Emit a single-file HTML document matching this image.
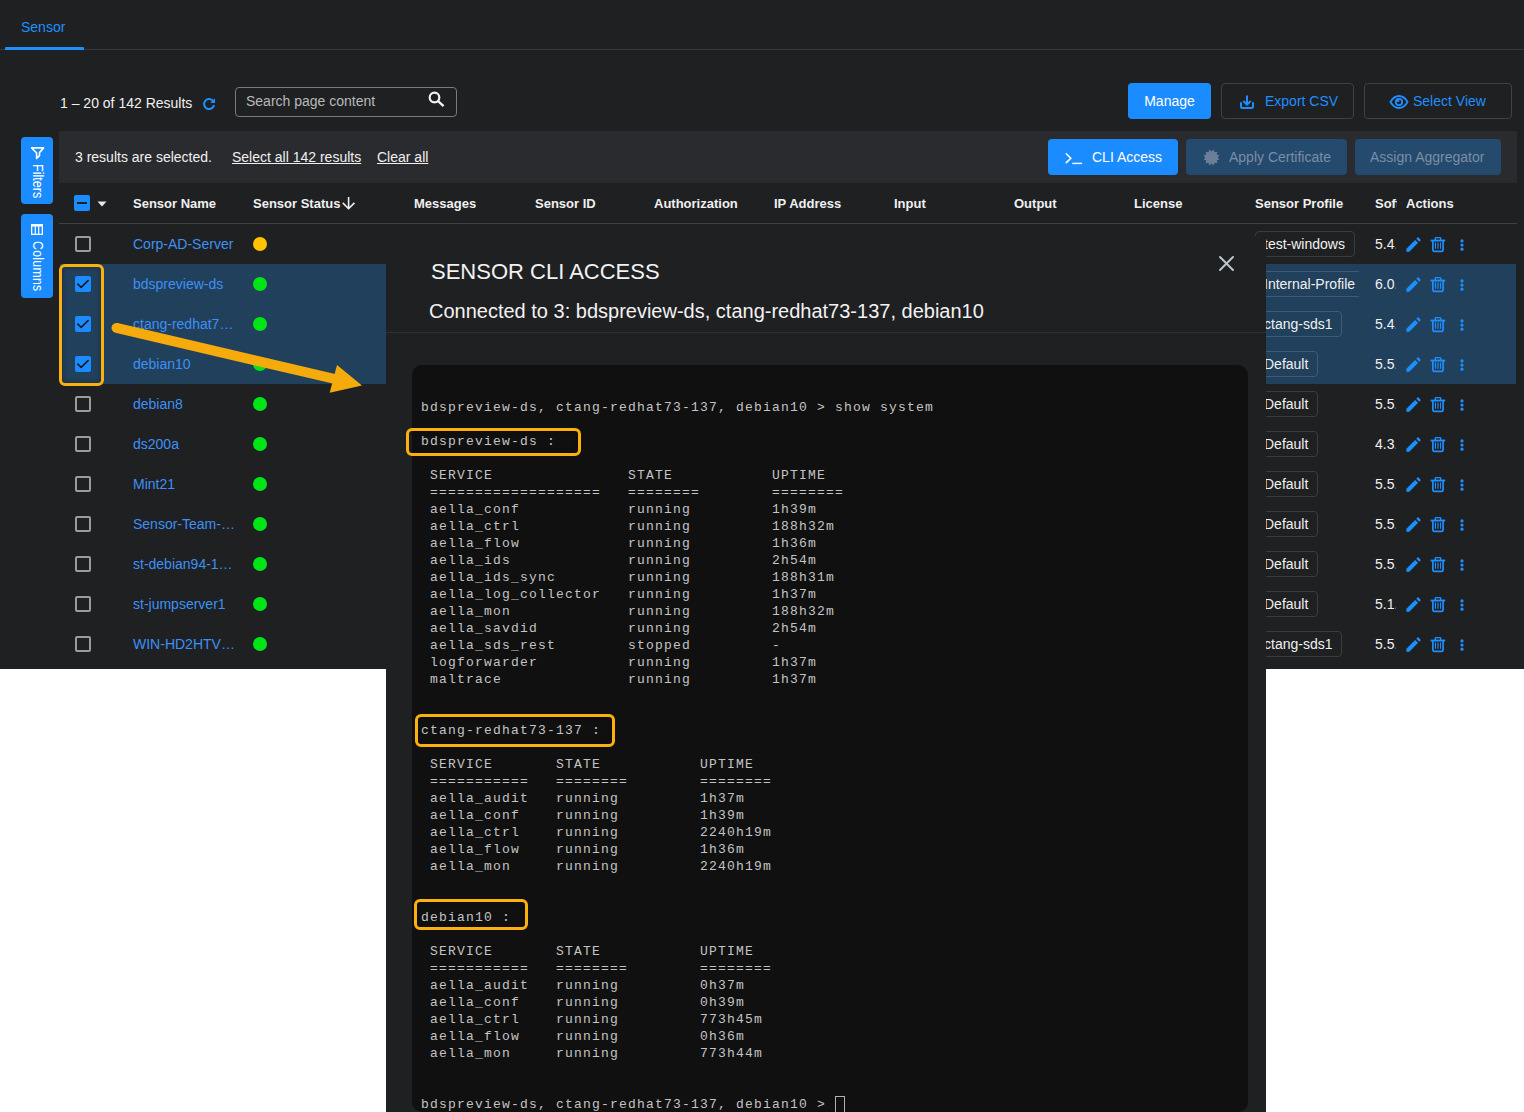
<!DOCTYPE html>
<html><head><meta charset="utf-8">
<style>
*{margin:0;padding:0;box-sizing:border-box}
html,body{width:1524px;height:1112px;overflow:hidden;background:#fff}
body{position:relative;font-family:"Liberation Sans",sans-serif;font-size:14px;color:#f0f0f0}
.a{position:absolute;white-space:nowrap}
#page{position:absolute;left:0;top:0;width:1524px;height:669px;background:#1f2022;overflow:hidden}
.btn{position:absolute;border-radius:4px;height:36px;line-height:36px}
.hdr{position:absolute;top:196px;font-weight:bold;font-size:13px;color:#f0f0f0;line-height:15px}
.row{position:absolute;left:0;width:1524px;height:40px}
.sel{background:#21405c}
.cb{position:absolute;left:75px;top:12px;width:16px;height:16px;border:2px solid #9b9b9b;border-radius:2px}
.cbc{position:absolute;left:75px;top:12px;width:16px;height:16px;background:#1b8cff;border-radius:2px}
.nm{position:absolute;left:133px;top:12px;line-height:16px;color:#3d90f5}
.dot{position:absolute;left:253px;top:13px;width:14px;height:14px;border-radius:50%;background:#00e516}
.tagc{position:absolute;top:7px;width:104px;height:26px;overflow:hidden}
.tag{position:absolute;left:0;top:0;white-space:nowrap;height:26px;line-height:24px;border:1px solid #3b3c40;border-radius:4px;padding:0 9px 0 8px;color:#f0f0f0;overflow:hidden}
.sel .tag{border-color:#3f5b76}
.sw{position:absolute;left:1375px;top:12px;line-height:16px;width:21px;overflow:hidden;color:#f0f0f0}
.ic{position:absolute;top:0}

#modal{position:absolute;left:386px;top:236px;width:880px;height:900px;background:#1f2022}
#modal > .a{margin-top:-236px}
#term{position:absolute;left:26px;top:129px;width:836px;height:747px;background:#101010;border-radius:10px;overflow:hidden}
#term pre{position:absolute;left:9px;top:34px;font-family:"Liberation Mono",monospace;font-size:13px;letter-spacing:1.2px;line-height:17px;color:#c4c4c4}
.cur{display:inline-block;width:9.5px;height:17px;border:1.5px solid #b0b0b0;vertical-align:-5px;margin-left:0}
.ob{position:absolute;border:3px solid #fbb00d;border-radius:6px;box-shadow:inset 0 0 5px rgba(0,0,0,0.35)}
</style></head><body>
<div id="page">
  <!-- tabs -->
  <div class="a" style="left:21px;top:20px;line-height:14px;color:#1e8fff">Sensor</div>
  <div class="a" style="left:0;top:49px;width:1524px;height:1px;background:#38393c"></div>
  <div class="a" style="left:5px;top:47px;width:79px;height:3px;background:#1e8fff;border-radius:1px 1px 0 0"></div>

  <!-- results row -->
  <div class="a" style="left:60px;top:96px;line-height:14px;color:#f0f0f0">1 – 20 of 142 Results</div>
  <svg class="a" style="left:202px;top:97px" width="14" height="14" viewBox="0 0 14 14"><path d="M11.2 4.2A5 5 0 1 0 12 8" fill="none" stroke="#1e8fff" stroke-width="2"/><path d="M13 1.2V6H8.2z" fill="#1e8fff"/></svg>
  <div class="a" style="left:235px;top:87px;width:222px;height:30px;border:1px solid #7a7a7a;border-radius:4px"></div>
  <div class="a" style="left:246px;top:94px;line-height:14px;color:#b9b9b9">Search page content</div>
  <svg class="a" style="left:428px;top:91px" width="17" height="17" viewBox="0 0 17 17"><circle cx="6.5" cy="6.5" r="4.8" fill="none" stroke="#f2f2f2" stroke-width="2.2"/><path d="M9.8 9.8L15.6 15.2" stroke="#f2f2f2" stroke-width="2.3"/></svg>

  <div class="btn" style="left:1128px;top:83px;width:83px;background:#1b8cff;color:#fff;text-align:center">Manage</div>
  <div class="btn" style="left:1221px;top:83px;width:133px;border:1px solid #414246;color:#1e8fff"></div>
  <svg class="a" style="left:1239px;top:94px" width="16" height="16" viewBox="0 0 16 16"><path d="M8 1.5v8.5M4.3 7L8 10.6l3.7-3.6" fill="none" stroke="#1e8fff" stroke-width="2"/><path d="M2 8.2v4.3q0 1.5 1.5 1.5h9q1.5 0 1.5-1.5V8.2" fill="none" stroke="#1e8fff" stroke-width="2"/></svg>
  <div class="a" style="left:1265px;top:94px;line-height:14px;color:#1e8fff">Export CSV</div>
  <div class="btn" style="left:1364px;top:83px;width:148px;border:1px solid #414246"></div>
  <svg class="a" style="left:1389px;top:94px" width="20" height="16" viewBox="0 0 20 16"><path d="M1.5 8C4 3.5 7 2 10 2s6 1.5 8.5 6C16 12.5 13 14 10 14S4 12.5 1.5 8z" fill="none" stroke="#1e8fff" stroke-width="1.8"/><circle cx="10" cy="8" r="3.2" fill="none" stroke="#1e8fff" stroke-width="1.8"/><path d="M10.3 7.7V5.6A2.4 2.4 0 0 0 7.6 8.1z" fill="#1e8fff"/></svg>
  <div class="a" style="left:1413px;top:94px;line-height:14px;color:#1e8fff">Select View</div>

  <!-- side buttons -->
  <div class="a" style="left:21px;top:137px;width:32px;height:67px;background:#1b8cff;border-radius:4px"></div>
  <svg class="a" style="left:30px;top:146px" width="16" height="15" viewBox="0 0 16 15"><path d="M1.6 1.9H13.6L9.5 6.6V9.6L6.6 12.4V7z" fill="none" stroke="#fff" stroke-width="1.6" stroke-linejoin="round"/></svg>
  <div class="a" style="left:31px;top:164px;writing-mode:vertical-rl;font-size:14px;line-height:14px;color:#fff;transform:scaleY(0.9);transform-origin:0 0">Filters</div>
  <div class="a" style="left:21px;top:214px;width:32px;height:84px;background:#1b8cff;border-radius:4px"></div>
  <svg class="a" style="left:31px;top:224px" width="12" height="11" viewBox="0 0 12 11"><path d="M0 0h12v11H0zM1.3 2.4v7.3h2.4V2.4zM4.9 2.4v7.3h2.2V2.4zM8.3 2.4v7.3h2.4V2.4z" fill="#fff" fill-rule="evenodd"/></svg>
  <div class="a" style="left:31px;top:241px;writing-mode:vertical-rl;font-size:14px;line-height:14px;color:#fff;transform:scaleY(0.88);transform-origin:0 0;letter-spacing:0.3px">Columns</div>

  <!-- selection bar -->
  <div class="a" style="left:59px;top:131px;width:1458px;height:52px;background:#2a2b2f"></div>
  <div class="a" style="left:75px;top:150px;line-height:14px;color:#f0f0f0">3 results are selected.</div>
  <div class="a" style="left:232px;top:150px;line-height:14px;color:#f0f0f0;text-decoration:underline">Select all 142 results</div>
  <div class="a" style="left:377px;top:150px;line-height:14px;color:#f0f0f0;text-decoration:underline">Clear all</div>
  <div class="btn" style="left:1048px;top:139px;width:130px;background:#1b8cff"></div>
  <svg class="a" style="left:1064px;top:152px" width="20" height="13" viewBox="0 0 20 13"><path d="M2.3 1.8L6.8 6.2 2.3 10.6" fill="none" stroke="#fff" stroke-width="1.6" stroke-linecap="round" stroke-linejoin="miter"/><path d="M8.3 11.4h9.8" stroke="#fff" stroke-width="1.4"/></svg>
  <div class="a" style="left:1092px;top:150px;line-height:14px;color:#fff">CLI Access</div>
  <div class="btn" style="left:1186px;top:139px;width:161px;background:#244a6e"></div>
  <svg class="a" style="left:1202px;top:148px" width="19" height="19" viewBox="0 0 19 19"><path fill="#6b7f9a" d="M11.62 1.58 L12.55 4.22 L15.30 3.70 L14.78 6.45 L17.42 7.38 L15.60 9.50 L17.42 11.62 L14.78 12.55 L15.30 15.30 L12.55 14.78 L11.62 17.42 L9.50 15.60 L7.38 17.42 L6.45 14.78 L3.70 15.30 L4.22 12.55 L1.58 11.62 L3.40 9.50 L1.58 7.38 L4.22 6.45 L3.70 3.70 L6.45 4.22 L7.38 1.58 L9.50 3.40z"/></svg>
  <div class="a" style="left:1229px;top:150px;line-height:14px;color:#7b8ea4">Apply Certificate</div>
  <div class="btn" style="left:1355px;top:139px;width:146px;background:#244a6e"></div>
  <div class="a" style="left:1370px;top:150px;line-height:14px;color:#7b8ea4">Assign Aggregator</div>

  <!-- table header -->
  <div class="a" style="left:74px;top:195px;width:16px;height:16px;background:#1b8cff;border-radius:2px"></div>
  <div class="a" style="left:77px;top:202px;width:10px;height:2px;background:#1f2022"></div>
  <svg class="a" style="left:97px;top:201px" width="10" height="6" viewBox="0 0 10 6"><path d="M0.5 0.5h9L5 5.5z" fill="#e8e8e8"/></svg>
  <div class="hdr" style="left:133px">Sensor Name</div>
  <div class="hdr" style="left:253px">Sensor Status</div>
  <svg class="a" style="left:342px;top:196px" width="14" height="15" viewBox="0 0 14 15"><path d="M6.6 1v11.6M0.8 6.9l5.8 5.8 5.8-5.8" fill="none" stroke="#f0f0f0" stroke-width="1.6"/></svg>
  <div class="hdr" style="left:414px">Messages</div>
  <div class="hdr" style="left:535px">Sensor ID</div>
  <div class="hdr" style="left:654px">Authorization</div>
  <div class="hdr" style="left:774px">IP Address</div>
  <div class="hdr" style="left:894px">Input</div>
  <div class="hdr" style="left:1014px">Output</div>
  <div class="hdr" style="left:1134px">License</div>
  <div class="hdr" style="left:1255px">Sensor Profile</div>
  <div class="hdr" style="left:1375px;width:22px;overflow:hidden">Software</div>
  <div class="hdr" style="left:1406px">Actions</div>
  <div class="a" style="left:59px;top:223px;width:1458px;height:1px;background:#3f4043"></div>

  <div class="row" style="top:224px"><div class="cb" style="left:75px"></div><div class="nm" style="left:133px">Corp-AD-Server</div><div class="dot" style="left:253px;background:#fec300"></div><div class="tagc" style="left:1255px"><div class="tag">test-windows</div></div><div class="sw" style="left:1375px">5.4.1</div><svg class="ic" style="left:1404px;top:10.8px" width="19" height="19" viewBox="0 0 24 24"><path fill="#1e8fff" d="M3 17.25V21h3.75L17.81 9.94l-3.75-3.75L3 17.25z"/><path fill="#1e8fff" d="M20.71 7.04a1 1 0 0 0 0-1.41l-2.34-2.34a1 1 0 0 0-1.41 0l-1.4 1.4 3.75 3.75z"/></svg><svg class="ic" style="left:1430px;top:12px" width="16" height="17" viewBox="0 0 16 17"><path d="M5.3 4V2.4q0-0.75 0.75-0.75h3.9q0.75 0 0.75 0.75V4" fill="none" stroke="#1e8fff" stroke-width="1.4"/><rect x="0.6" y="3.6" width="14.6" height="1.9" fill="#1e8fff"/><path d="M2.9 5v8.9q0 1.5 1.5 1.5h7.2q1.5 0 1.5-1.5V5" fill="none" stroke="#1e8fff" stroke-width="1.7"/><path d="M5.5 6.6v6.2M8 6.6v6.2M10.5 6.6v6.2" stroke="#1e8fff" stroke-width="1.1"/></svg><svg class="ic" style="left:1459px;top:12px" width="6" height="16" viewBox="0 0 6 16"><circle cx="3" cy="4.9" r="1.6" fill="#1e8fff"/><circle cx="3" cy="9.1" r="1.6" fill="#1e8fff"/><circle cx="3" cy="13.2" r="1.6" fill="#1e8fff"/></svg></div>
<div class="row sel" style="top:264px;left:60px;width:1456px"><div class="cbc" style="left:15px"><svg width="16" height="16" viewBox="0 0 16 16"><path d="M2.4 7.6L6.1 11.3 13.6 4.2" fill="none" stroke="#1a1a1a" stroke-width="1.6"/></svg></div><div class="nm" style="left:73px">bdspreview-ds</div><div class="dot" style="left:193px;background:#00e516"></div><div class="tagc" style="left:1195px"><div class="tag">Internal-Profile</div></div><div class="sw" style="left:1315px">6.0.1</div><svg class="ic" style="left:1344px;top:10.8px" width="19" height="19" viewBox="0 0 24 24"><path fill="#1e8fff" d="M3 17.25V21h3.75L17.81 9.94l-3.75-3.75L3 17.25z"/><path fill="#1e8fff" d="M20.71 7.04a1 1 0 0 0 0-1.41l-2.34-2.34a1 1 0 0 0-1.41 0l-1.4 1.4 3.75 3.75z"/></svg><svg class="ic" style="left:1370px;top:12px" width="16" height="17" viewBox="0 0 16 17"><path d="M5.3 4V2.4q0-0.75 0.75-0.75h3.9q0.75 0 0.75 0.75V4" fill="none" stroke="#1e8fff" stroke-width="1.4"/><rect x="0.6" y="3.6" width="14.6" height="1.9" fill="#1e8fff"/><path d="M2.9 5v8.9q0 1.5 1.5 1.5h7.2q1.5 0 1.5-1.5V5" fill="none" stroke="#1e8fff" stroke-width="1.7"/><path d="M5.5 6.6v6.2M8 6.6v6.2M10.5 6.6v6.2" stroke="#1e8fff" stroke-width="1.1"/></svg><svg class="ic" style="left:1399px;top:12px" width="6" height="16" viewBox="0 0 6 16"><circle cx="3" cy="4.9" r="1.6" fill="#1e8fff"/><circle cx="3" cy="9.1" r="1.6" fill="#1e8fff"/><circle cx="3" cy="13.2" r="1.6" fill="#1e8fff"/></svg></div>
<div class="row sel" style="top:304px;left:60px;width:1456px"><div class="cbc" style="left:15px"><svg width="16" height="16" viewBox="0 0 16 16"><path d="M2.4 7.6L6.1 11.3 13.6 4.2" fill="none" stroke="#1a1a1a" stroke-width="1.6"/></svg></div><div class="nm" style="left:73px">ctang-redhat7…</div><div class="dot" style="left:193px;background:#00e516"></div><div class="tagc" style="left:1195px"><div class="tag">ctang-sds1</div></div><div class="sw" style="left:1315px">5.4.1</div><svg class="ic" style="left:1344px;top:10.8px" width="19" height="19" viewBox="0 0 24 24"><path fill="#1e8fff" d="M3 17.25V21h3.75L17.81 9.94l-3.75-3.75L3 17.25z"/><path fill="#1e8fff" d="M20.71 7.04a1 1 0 0 0 0-1.41l-2.34-2.34a1 1 0 0 0-1.41 0l-1.4 1.4 3.75 3.75z"/></svg><svg class="ic" style="left:1370px;top:12px" width="16" height="17" viewBox="0 0 16 17"><path d="M5.3 4V2.4q0-0.75 0.75-0.75h3.9q0.75 0 0.75 0.75V4" fill="none" stroke="#1e8fff" stroke-width="1.4"/><rect x="0.6" y="3.6" width="14.6" height="1.9" fill="#1e8fff"/><path d="M2.9 5v8.9q0 1.5 1.5 1.5h7.2q1.5 0 1.5-1.5V5" fill="none" stroke="#1e8fff" stroke-width="1.7"/><path d="M5.5 6.6v6.2M8 6.6v6.2M10.5 6.6v6.2" stroke="#1e8fff" stroke-width="1.1"/></svg><svg class="ic" style="left:1399px;top:12px" width="6" height="16" viewBox="0 0 6 16"><circle cx="3" cy="4.9" r="1.6" fill="#1e8fff"/><circle cx="3" cy="9.1" r="1.6" fill="#1e8fff"/><circle cx="3" cy="13.2" r="1.6" fill="#1e8fff"/></svg></div>
<div class="row sel" style="top:344px;left:60px;width:1456px"><div class="cbc" style="left:15px"><svg width="16" height="16" viewBox="0 0 16 16"><path d="M2.4 7.6L6.1 11.3 13.6 4.2" fill="none" stroke="#1a1a1a" stroke-width="1.6"/></svg></div><div class="nm" style="left:73px">debian10</div><div class="dot" style="left:193px;background:#00e516"></div><div class="tagc" style="left:1195px"><div class="tag">Default</div></div><div class="sw" style="left:1315px">5.5.1</div><svg class="ic" style="left:1344px;top:10.8px" width="19" height="19" viewBox="0 0 24 24"><path fill="#1e8fff" d="M3 17.25V21h3.75L17.81 9.94l-3.75-3.75L3 17.25z"/><path fill="#1e8fff" d="M20.71 7.04a1 1 0 0 0 0-1.41l-2.34-2.34a1 1 0 0 0-1.41 0l-1.4 1.4 3.75 3.75z"/></svg><svg class="ic" style="left:1370px;top:12px" width="16" height="17" viewBox="0 0 16 17"><path d="M5.3 4V2.4q0-0.75 0.75-0.75h3.9q0.75 0 0.75 0.75V4" fill="none" stroke="#1e8fff" stroke-width="1.4"/><rect x="0.6" y="3.6" width="14.6" height="1.9" fill="#1e8fff"/><path d="M2.9 5v8.9q0 1.5 1.5 1.5h7.2q1.5 0 1.5-1.5V5" fill="none" stroke="#1e8fff" stroke-width="1.7"/><path d="M5.5 6.6v6.2M8 6.6v6.2M10.5 6.6v6.2" stroke="#1e8fff" stroke-width="1.1"/></svg><svg class="ic" style="left:1399px;top:12px" width="6" height="16" viewBox="0 0 6 16"><circle cx="3" cy="4.9" r="1.6" fill="#1e8fff"/><circle cx="3" cy="9.1" r="1.6" fill="#1e8fff"/><circle cx="3" cy="13.2" r="1.6" fill="#1e8fff"/></svg></div>
<div class="row" style="top:384px"><div class="cb" style="left:75px"></div><div class="nm" style="left:133px">debian8</div><div class="dot" style="left:253px;background:#00e516"></div><div class="tagc" style="left:1255px"><div class="tag">Default</div></div><div class="sw" style="left:1375px">5.5.1</div><svg class="ic" style="left:1404px;top:10.8px" width="19" height="19" viewBox="0 0 24 24"><path fill="#1e8fff" d="M3 17.25V21h3.75L17.81 9.94l-3.75-3.75L3 17.25z"/><path fill="#1e8fff" d="M20.71 7.04a1 1 0 0 0 0-1.41l-2.34-2.34a1 1 0 0 0-1.41 0l-1.4 1.4 3.75 3.75z"/></svg><svg class="ic" style="left:1430px;top:12px" width="16" height="17" viewBox="0 0 16 17"><path d="M5.3 4V2.4q0-0.75 0.75-0.75h3.9q0.75 0 0.75 0.75V4" fill="none" stroke="#1e8fff" stroke-width="1.4"/><rect x="0.6" y="3.6" width="14.6" height="1.9" fill="#1e8fff"/><path d="M2.9 5v8.9q0 1.5 1.5 1.5h7.2q1.5 0 1.5-1.5V5" fill="none" stroke="#1e8fff" stroke-width="1.7"/><path d="M5.5 6.6v6.2M8 6.6v6.2M10.5 6.6v6.2" stroke="#1e8fff" stroke-width="1.1"/></svg><svg class="ic" style="left:1459px;top:12px" width="6" height="16" viewBox="0 0 6 16"><circle cx="3" cy="4.9" r="1.6" fill="#1e8fff"/><circle cx="3" cy="9.1" r="1.6" fill="#1e8fff"/><circle cx="3" cy="13.2" r="1.6" fill="#1e8fff"/></svg></div>
<div class="row" style="top:424px"><div class="cb" style="left:75px"></div><div class="nm" style="left:133px">ds200a</div><div class="dot" style="left:253px;background:#00e516"></div><div class="tagc" style="left:1255px"><div class="tag">Default</div></div><div class="sw" style="left:1375px">4.3.1</div><svg class="ic" style="left:1404px;top:10.8px" width="19" height="19" viewBox="0 0 24 24"><path fill="#1e8fff" d="M3 17.25V21h3.75L17.81 9.94l-3.75-3.75L3 17.25z"/><path fill="#1e8fff" d="M20.71 7.04a1 1 0 0 0 0-1.41l-2.34-2.34a1 1 0 0 0-1.41 0l-1.4 1.4 3.75 3.75z"/></svg><svg class="ic" style="left:1430px;top:12px" width="16" height="17" viewBox="0 0 16 17"><path d="M5.3 4V2.4q0-0.75 0.75-0.75h3.9q0.75 0 0.75 0.75V4" fill="none" stroke="#1e8fff" stroke-width="1.4"/><rect x="0.6" y="3.6" width="14.6" height="1.9" fill="#1e8fff"/><path d="M2.9 5v8.9q0 1.5 1.5 1.5h7.2q1.5 0 1.5-1.5V5" fill="none" stroke="#1e8fff" stroke-width="1.7"/><path d="M5.5 6.6v6.2M8 6.6v6.2M10.5 6.6v6.2" stroke="#1e8fff" stroke-width="1.1"/></svg><svg class="ic" style="left:1459px;top:12px" width="6" height="16" viewBox="0 0 6 16"><circle cx="3" cy="4.9" r="1.6" fill="#1e8fff"/><circle cx="3" cy="9.1" r="1.6" fill="#1e8fff"/><circle cx="3" cy="13.2" r="1.6" fill="#1e8fff"/></svg></div>
<div class="row" style="top:464px"><div class="cb" style="left:75px"></div><div class="nm" style="left:133px">Mint21</div><div class="dot" style="left:253px;background:#00e516"></div><div class="tagc" style="left:1255px"><div class="tag">Default</div></div><div class="sw" style="left:1375px">5.5.1</div><svg class="ic" style="left:1404px;top:10.8px" width="19" height="19" viewBox="0 0 24 24"><path fill="#1e8fff" d="M3 17.25V21h3.75L17.81 9.94l-3.75-3.75L3 17.25z"/><path fill="#1e8fff" d="M20.71 7.04a1 1 0 0 0 0-1.41l-2.34-2.34a1 1 0 0 0-1.41 0l-1.4 1.4 3.75 3.75z"/></svg><svg class="ic" style="left:1430px;top:12px" width="16" height="17" viewBox="0 0 16 17"><path d="M5.3 4V2.4q0-0.75 0.75-0.75h3.9q0.75 0 0.75 0.75V4" fill="none" stroke="#1e8fff" stroke-width="1.4"/><rect x="0.6" y="3.6" width="14.6" height="1.9" fill="#1e8fff"/><path d="M2.9 5v8.9q0 1.5 1.5 1.5h7.2q1.5 0 1.5-1.5V5" fill="none" stroke="#1e8fff" stroke-width="1.7"/><path d="M5.5 6.6v6.2M8 6.6v6.2M10.5 6.6v6.2" stroke="#1e8fff" stroke-width="1.1"/></svg><svg class="ic" style="left:1459px;top:12px" width="6" height="16" viewBox="0 0 6 16"><circle cx="3" cy="4.9" r="1.6" fill="#1e8fff"/><circle cx="3" cy="9.1" r="1.6" fill="#1e8fff"/><circle cx="3" cy="13.2" r="1.6" fill="#1e8fff"/></svg></div>
<div class="row" style="top:504px"><div class="cb" style="left:75px"></div><div class="nm" style="left:133px">Sensor-Team-…</div><div class="dot" style="left:253px;background:#00e516"></div><div class="tagc" style="left:1255px"><div class="tag">Default</div></div><div class="sw" style="left:1375px">5.5.1</div><svg class="ic" style="left:1404px;top:10.8px" width="19" height="19" viewBox="0 0 24 24"><path fill="#1e8fff" d="M3 17.25V21h3.75L17.81 9.94l-3.75-3.75L3 17.25z"/><path fill="#1e8fff" d="M20.71 7.04a1 1 0 0 0 0-1.41l-2.34-2.34a1 1 0 0 0-1.41 0l-1.4 1.4 3.75 3.75z"/></svg><svg class="ic" style="left:1430px;top:12px" width="16" height="17" viewBox="0 0 16 17"><path d="M5.3 4V2.4q0-0.75 0.75-0.75h3.9q0.75 0 0.75 0.75V4" fill="none" stroke="#1e8fff" stroke-width="1.4"/><rect x="0.6" y="3.6" width="14.6" height="1.9" fill="#1e8fff"/><path d="M2.9 5v8.9q0 1.5 1.5 1.5h7.2q1.5 0 1.5-1.5V5" fill="none" stroke="#1e8fff" stroke-width="1.7"/><path d="M5.5 6.6v6.2M8 6.6v6.2M10.5 6.6v6.2" stroke="#1e8fff" stroke-width="1.1"/></svg><svg class="ic" style="left:1459px;top:12px" width="6" height="16" viewBox="0 0 6 16"><circle cx="3" cy="4.9" r="1.6" fill="#1e8fff"/><circle cx="3" cy="9.1" r="1.6" fill="#1e8fff"/><circle cx="3" cy="13.2" r="1.6" fill="#1e8fff"/></svg></div>
<div class="row" style="top:544px"><div class="cb" style="left:75px"></div><div class="nm" style="left:133px">st-debian94-1…</div><div class="dot" style="left:253px;background:#00e516"></div><div class="tagc" style="left:1255px"><div class="tag">Default</div></div><div class="sw" style="left:1375px">5.5.1</div><svg class="ic" style="left:1404px;top:10.8px" width="19" height="19" viewBox="0 0 24 24"><path fill="#1e8fff" d="M3 17.25V21h3.75L17.81 9.94l-3.75-3.75L3 17.25z"/><path fill="#1e8fff" d="M20.71 7.04a1 1 0 0 0 0-1.41l-2.34-2.34a1 1 0 0 0-1.41 0l-1.4 1.4 3.75 3.75z"/></svg><svg class="ic" style="left:1430px;top:12px" width="16" height="17" viewBox="0 0 16 17"><path d="M5.3 4V2.4q0-0.75 0.75-0.75h3.9q0.75 0 0.75 0.75V4" fill="none" stroke="#1e8fff" stroke-width="1.4"/><rect x="0.6" y="3.6" width="14.6" height="1.9" fill="#1e8fff"/><path d="M2.9 5v8.9q0 1.5 1.5 1.5h7.2q1.5 0 1.5-1.5V5" fill="none" stroke="#1e8fff" stroke-width="1.7"/><path d="M5.5 6.6v6.2M8 6.6v6.2M10.5 6.6v6.2" stroke="#1e8fff" stroke-width="1.1"/></svg><svg class="ic" style="left:1459px;top:12px" width="6" height="16" viewBox="0 0 6 16"><circle cx="3" cy="4.9" r="1.6" fill="#1e8fff"/><circle cx="3" cy="9.1" r="1.6" fill="#1e8fff"/><circle cx="3" cy="13.2" r="1.6" fill="#1e8fff"/></svg></div>
<div class="row" style="top:584px"><div class="cb" style="left:75px"></div><div class="nm" style="left:133px">st-jumpserver1</div><div class="dot" style="left:253px;background:#00e516"></div><div class="tagc" style="left:1255px"><div class="tag">Default</div></div><div class="sw" style="left:1375px">5.1.1</div><svg class="ic" style="left:1404px;top:10.8px" width="19" height="19" viewBox="0 0 24 24"><path fill="#1e8fff" d="M3 17.25V21h3.75L17.81 9.94l-3.75-3.75L3 17.25z"/><path fill="#1e8fff" d="M20.71 7.04a1 1 0 0 0 0-1.41l-2.34-2.34a1 1 0 0 0-1.41 0l-1.4 1.4 3.75 3.75z"/></svg><svg class="ic" style="left:1430px;top:12px" width="16" height="17" viewBox="0 0 16 17"><path d="M5.3 4V2.4q0-0.75 0.75-0.75h3.9q0.75 0 0.75 0.75V4" fill="none" stroke="#1e8fff" stroke-width="1.4"/><rect x="0.6" y="3.6" width="14.6" height="1.9" fill="#1e8fff"/><path d="M2.9 5v8.9q0 1.5 1.5 1.5h7.2q1.5 0 1.5-1.5V5" fill="none" stroke="#1e8fff" stroke-width="1.7"/><path d="M5.5 6.6v6.2M8 6.6v6.2M10.5 6.6v6.2" stroke="#1e8fff" stroke-width="1.1"/></svg><svg class="ic" style="left:1459px;top:12px" width="6" height="16" viewBox="0 0 6 16"><circle cx="3" cy="4.9" r="1.6" fill="#1e8fff"/><circle cx="3" cy="9.1" r="1.6" fill="#1e8fff"/><circle cx="3" cy="13.2" r="1.6" fill="#1e8fff"/></svg></div>
<div class="row" style="top:624px"><div class="cb" style="left:75px"></div><div class="nm" style="left:133px">WIN-HD2HTV…</div><div class="dot" style="left:253px;background:#00e516"></div><div class="tagc" style="left:1255px"><div class="tag">ctang-sds1</div></div><div class="sw" style="left:1375px">5.5.1</div><svg class="ic" style="left:1404px;top:10.8px" width="19" height="19" viewBox="0 0 24 24"><path fill="#1e8fff" d="M3 17.25V21h3.75L17.81 9.94l-3.75-3.75L3 17.25z"/><path fill="#1e8fff" d="M20.71 7.04a1 1 0 0 0 0-1.41l-2.34-2.34a1 1 0 0 0-1.41 0l-1.4 1.4 3.75 3.75z"/></svg><svg class="ic" style="left:1430px;top:12px" width="16" height="17" viewBox="0 0 16 17"><path d="M5.3 4V2.4q0-0.75 0.75-0.75h3.9q0.75 0 0.75 0.75V4" fill="none" stroke="#1e8fff" stroke-width="1.4"/><rect x="0.6" y="3.6" width="14.6" height="1.9" fill="#1e8fff"/><path d="M2.9 5v8.9q0 1.5 1.5 1.5h7.2q1.5 0 1.5-1.5V5" fill="none" stroke="#1e8fff" stroke-width="1.7"/><path d="M5.5 6.6v6.2M8 6.6v6.2M10.5 6.6v6.2" stroke="#1e8fff" stroke-width="1.1"/></svg><svg class="ic" style="left:1459px;top:12px" width="6" height="16" viewBox="0 0 6 16"><circle cx="3" cy="4.9" r="1.6" fill="#1e8fff"/><circle cx="3" cy="9.1" r="1.6" fill="#1e8fff"/><circle cx="3" cy="13.2" r="1.6" fill="#1e8fff"/></svg></div>
</div>

<div id="modal">
  <div class="a" style="left:45px;top:264px;font-size:22px;line-height:16px;color:#f2f2f2">SENSOR CLI ACCESS</div>
  <div class="a" style="left:43px;top:303px;font-size:20px;line-height:16px;color:#f2f2f2">Connected to 3: bdspreview-ds, ctang-redhat73-137, debian10</div>
  <svg class="a" style="left:832px;top:255px" width="17" height="17" viewBox="0 0 17 17"><path d="M2 2l13 13M15 2L2 15" stroke="#b9c6cc" stroke-width="2" stroke-linecap="round"/></svg>
  <div class="a" style="left:0;top:332px;width:880px;height:1px;background:#2f3034"></div>
  <div id="term"><pre>bdspreview-ds, ctang-redhat73-137, debian10 &gt; show system

bdspreview-ds :

 SERVICE               STATE           UPTIME
 ===================   ========        ========
 aella_conf            running         1h39m
 aella_ctrl            running         188h32m
 aella_flow            running         1h36m
 aella_ids             running         2h54m
 aella_ids_sync        running         188h31m
 aella_log_collector   running         1h37m
 aella_mon             running         188h32m
 aella_savdid          running         2h54m
 aella_sds_rest        stopped         -
 logforwarder          running         1h37m
 maltrace              running         1h37m


ctang-redhat73-137 :

 SERVICE       STATE           UPTIME
 ===========   ========        ========
 aella_audit   running         1h37m
 aella_conf    running         1h39m
 aella_ctrl    running         2240h19m
 aella_flow    running         1h36m
 aella_mon     running         2240h19m


debian10 :

 SERVICE       STATE           UPTIME
 ===========   ========        ========
 aella_audit   running         0h37m
 aella_conf    running         0h39m
 aella_ctrl    running         773h45m
 aella_flow    running         0h36m
 aella_mon     running         773h44m


bdspreview-ds, ctang-redhat73-137, debian10 > <span class="cur"></span></pre></div>
</div>

<div class="ob" style="left:59px;top:264px;width:45px;height:122px"></div>
<svg class="a" style="left:0;top:0" width="400" height="420" viewBox="0 0 400 420"><path d="M116.5 327.9L335 379" stroke="#f6ab0c" stroke-width="10" stroke-linecap="round"/><path d="M362 385.5L337 365 329.7 392.8z" fill="#f6ab0c"/></svg>
<div class="ob" style="left:406px;top:428px;width:175px;height:28px"></div>
<div class="ob" style="left:415px;top:714px;width:200px;height:33px"></div>
<div class="ob" style="left:414px;top:899px;width:114px;height:31px"></div>
</body></html>
